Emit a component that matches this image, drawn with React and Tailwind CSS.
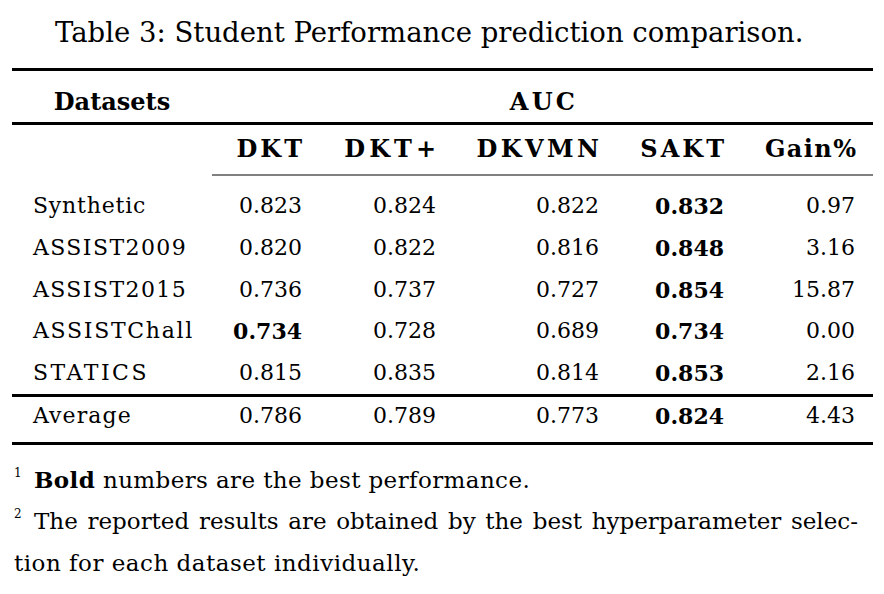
import React from "react";

const cols = [
  "w-[200px] pl-[21px] text-left",
  "w-[90px] text-right",
  "w-[134px] text-right",
  "w-[163px] text-right",
  "w-[125px] text-right",
  "w-[131px] text-right",
];

const rows = [
  { c: ["Synthetic", "0.823", "0.824", "0.822", "0.832", "0.97"], b: [4], t: "tracking-[0.8px]" },
  { c: ["ASSIST2009", "0.820", "0.822", "0.816", "0.848", "3.16"], b: [4], t: "tracking-[1.4px]" },
  { c: ["ASSIST2015", "0.736", "0.737", "0.727", "0.854", "15.87"], b: [4], t: "tracking-[1.4px]" },
  { c: ["ASSISTChall", "0.734", "0.728", "0.689", "0.734", "0.00"], b: [1, 4], t: "tracking-[1.7px]" },
  { c: ["STATICS", "0.815", "0.835", "0.814", "0.853", "2.16"], b: [4], t: "tracking-[2.5px]" },
];
const avg = { c: ["Average", "0.786", "0.789", "0.773", "0.824", "4.43"], b: [4], t: "tracking-[1.1px]" };

function Cells({ r }) {
  return r.c.map((t, i) => (
    <div
      key={i}
      className={`shrink-0 ${cols[i]} ${r.b.includes(i) ? "font-bold" : ""} ${i === 0 ? r.t : ""}`}
    >
      {t}
    </div>
  ));
}

export default function App() {
  return (
    <div className="w-[884px] h-[594px] bg-white text-black font-['DejaVu_Serif',serif] overflow-hidden">
      <div className="h-[68px] pt-[18.7px] pl-[55px] text-[27.5px] leading-none whitespace-nowrap">
        Table 3: Student Performance prediction comparison.
      </div>
      <div className="ml-[12px] w-[861px] text-[22px] leading-none">
        <div className="h-[3px] bg-black" />
        <div className="h-[51px] pt-[18.7px] flex font-bold text-[24px]">
          <div className="w-[200px] shrink-0 text-center">Datasets</div>
          <div className="flex-1 text-center tracking-[3.3px] pl-[3px]">AUC</div>
        </div>
        <div className="h-[3px] bg-black" />
        <div className="h-[49px] pt-[11.7px] flex font-bold text-[24px]">
          <div className={`shrink-0 ${cols[0]}`}></div>
          <div className={`shrink-0 ${cols[1]}`}>
            <span className="tracking-[3px] mr-[-3px]">DKT</span>
          </div>
          <div className={`shrink-0 ${cols[2]}`}>
            <span className="tracking-[4px] mr-[-4px]">DKT+</span>
          </div>
          <div className={`shrink-0 ${cols[3]}`}>
            <span className="tracking-[3.4px] mr-[-3.4px]">DKVMN</span>
          </div>
          <div className={`shrink-0 ${cols[4]}`}>
            <span className="tracking-[3px] mr-[-3px]">SAKT</span>
          </div>
          <div className={`shrink-0 ${cols[5]}`}>
            <span className="tracking-[1.4px] mr-[-2.4px]">Gain%</span>
          </div>
        </div>
        <div className="ml-[200px] h-[2px] bg-[#808080]" />
        <div className="pt-[9.6px]">
          {rows.map((r, i) => (
            <div key={i} className="h-[41.6px] flex items-center">
              <Cells r={r} />
            </div>
          ))}
        </div>
        <div className="h-[3px] bg-black" />
        <div className="h-[45.4px] pt-[8.8px] flex">
          <Cells r={avg} />
        </div>
        <div className="h-[3px] bg-black" />
      </div>
      <div className="ml-[14px] w-[844px] mt-[13.65px] text-[23px] leading-[41.5px]">
        <div className="whitespace-nowrap tracking-[0.4px]">
          <span className="inline-block w-[20px] text-[12px] leading-none align-[11px]">1</span>
          <span className="font-bold">Bold</span> numbers are the best performance.
        </div>
        <div className="text-justify [text-align-last:justify]">
          <span className="inline-block w-[20px] text-[12px] leading-none align-[11px]">2</span>
          The reported results are obtained by the best hyperparameter selec-
        </div>
        <div className="whitespace-nowrap tracking-[0.5px]">tion for each dataset individually.</div>
      </div>
    </div>
  );
}
